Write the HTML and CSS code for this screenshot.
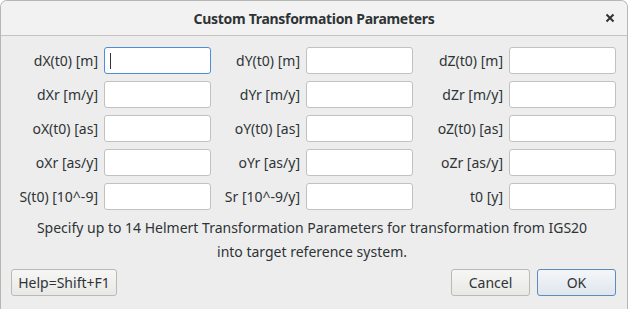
FILE: index.html
```html
<!DOCTYPE html>
<html lang="en">
<head>
    <meta charset="UTF-8">
    <title>Custom Transformation Parameters</title>
    <link rel="stylesheet" href="styles.css">
</head>
<body>
    <div class="dialog">
        <!-- Title bar -->
        <div class="titlebar">
            <span class="title">Custom Transformation Parameters</span>
            <button class="close-btn" title="Close">
                <svg width="10" height="10" viewBox="0 0 10 10">
                    <path d="M1.5 1.5 L8.5 8.5 M8.5 1.5 L1.5 8.5" stroke="#2e3436" stroke-width="2" fill="none"/>
                </svg>
            </button>
        </div>

        <div class="content">
            <div class="params">
                <label for="dx">dX(t0) [m]</label><input type="text" id="dx" class="focused">
                <label for="dy">dY(t0) [m]</label><input type="text" id="dy">
                <label for="dz">dZ(t0) [m]</label><input type="text" id="dz">

                <label for="dxr">dXr [m/y]</label><input type="text" id="dxr">
                <label for="dyr">dYr [m/y]</label><input type="text" id="dyr">
                <label for="dzr">dZr [m/y]</label><input type="text" id="dzr">

                <label for="ox">oX(t0) [as]</label><input type="text" id="ox">
                <label for="oy">oY(t0) [as]</label><input type="text" id="oy">
                <label for="oz">oZ(t0) [as]</label><input type="text" id="oz">

                <label for="oxr">oXr [as/y]</label><input type="text" id="oxr">
                <label for="oyr">oYr [as/y]</label><input type="text" id="oyr">
                <label for="ozr">oZr [as/y]</label><input type="text" id="ozr">

                <label for="sc">S(t0) [10^-9]</label><input type="text" id="sc">
                <label for="sr">Sr [10^-9/y]</label><input type="text" id="sr">
                <label for="t0">t0 [y]</label><input type="text" id="t0">
            </div>

            <p class="info">Specify up to 14 Helmert Transformation Parameters for transformation from IGS20<br>into target reference system.</p>

            <div class="actions">
                <button class="btn help-btn">Help=Shift+F1</button>
                <span class="spacer"></span>
                <button class="btn">Cancel</button>
                <button class="btn ok-btn">OK</button>
            </div>
        </div>
    </div>
</body>
</html>
```

FILE: styles.css
```css
* {
    margin: 0;
    padding: 0;
    box-sizing: border-box;
}

body {
    background-color: #ffffff;
    font-family: 'Noto Sans', sans-serif;
    font-size: 14px;
    color: #2e3436;
}

.dialog {
    width: 628px;
    height: 309px;
    background-color: #ededed;
    border: 1px solid #b6b6b3;
    border-bottom: none;
    border-radius: 7px 7px 0 0;
    overflow: hidden;
}

/* Title bar */
.titlebar {
    height: 35px;
    background-color: #f2f2f2;
    border-bottom: 1px solid #c4c4c1;
    display: flex;
    align-items: center;
    justify-content: center;
    position: relative;
}

.title {
    font-weight: bold;
    font-size: 14px;
    letter-spacing: -0.3px;
    color: #2e3436;
}

.close-btn {
    position: absolute;
    right: 12px;
    top: 12px;
    width: 10px;
    height: 10px;
    border: none;
    background: none;
    display: flex;
}

/* Content */
.content {
    padding: 11px 11px 0 7px;
}

.params {
    display: grid;
    grid-template-columns: 96px 107px 95px 107px 96px 107px;
    row-gap: 7px;
    align-items: center;
}

.params label {
    text-align: right;
    padding-right: 6px;
    white-space: nowrap;
    color: #2e3436;
}

.params input {
    height: 27px;
    width: 107px;
    background-color: #ffffff;
    border: 1px solid #c1c1bd;
    border-radius: 3px;
    font-family: inherit;
    font-size: 14px;
    padding: 0 6px;
    outline: none;
}

/* first field has the keyboard focus: blue frame and a caret */
.params input.focused {
    border-color: #4a90d9;
    background-image: linear-gradient(#2e3436, #2e3436);
    background-repeat: no-repeat;
    background-size: 1px 16px;
    background-position: 5px 5px;
}

.info {
    text-align: center;
    line-height: 24px;
    margin-top: 6px;
    color: #2e3436;
}

.actions {
    display: flex;
    margin-top: 5px;
    gap: 7px;
}

.spacer {
    flex: 1;
}

.btn {
    height: 27px;
    font-family: 'Noto Sans', sans-serif;
    font-size: 14px;
    color: #2e3436;
    background: linear-gradient(#f6f6f5, #e8e8e6);
    border: 1px solid #b9b9b5;
    border-radius: 3px;
    width: 79px;
}

.help-btn {
    width: 106px;
    margin-left: 3px;
}

.ok-btn {
    border-color: #5f8bb8;
    background: linear-gradient(#f4f6f9, #dfe6ee);
}
```
